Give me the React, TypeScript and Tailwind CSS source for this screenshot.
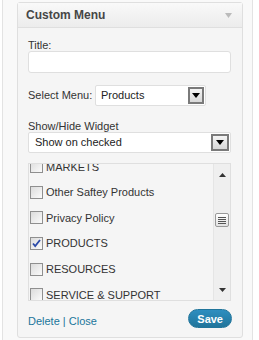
import React from 'react';

const items = [
  { label: 'MARKETS', checked: false },
  { label: 'Other Saftey Products', checked: false },
  { label: 'Privacy Policy', checked: false },
  { label: 'PRODUCTS', checked: true },
  { label: 'RESOURCES', checked: false },
  { label: 'SERVICE & SUPPORT', checked: false },
];

function DropButton({ className = '' }: { className?: string }) {
  return (
    <div
      className={`flex items-center justify-center border-2 border-[#7a7a7a] bg-gradient-to-b from-[#f4f4f4] to-[#d8d8d8] ${className}`}
    >
      <svg width="8" height="5" viewBox="0 0 8 5">
        <path d="M0 0h8L4 5z" fill="#000" />
      </svg>
    </div>
  );
}

function Checkbox({ checked }: { checked: boolean }) {
  return (
    <div className="relative h-[13px] w-[13px] shrink-0 border border-[#8f8f8f] bg-gradient-to-br from-[#dcdcdc] to-[#fbfbfb]">
      {checked && (
        <svg className="absolute left-[1px] top-[1px]" width="9" height="9" viewBox="0 0 9 9">
          <path d="M1 4.5l2.2 2.6L8 1" stroke="#2b4aa8" strokeWidth="1.8" fill="none" />
        </svg>
      )}
    </div>
  );
}

export default function App() {
  return (
    <div
      className="h-[340px] w-[259px] overflow-hidden bg-white text-[11px] text-[#333]"
      style={{ fontFamily: '"Liberation Sans", Arial, sans-serif' }}
    >
      <div className="ml-[2px] h-full w-[251px] border-x border-[#e3e3e3] bg-[#f9f9f9] pl-[14px] pt-[2px]">
        <div className="w-[226px] rounded-[3px] border border-[#dfdfdf] bg-[#f5f5f5]">
          {/* header */}
          <div className="flex h-[25px] items-center justify-between border-b border-[#dfdfdf] bg-gradient-to-b from-[#f9f9f9] to-[#ececec] pl-[8px] pr-[10px]">
            <span className="text-[12px] font-bold text-[#464646]">Custom Menu</span>
            <svg width="7" height="5" viewBox="0 0 7 5">
              <path d="M0 0h7L3.5 5z" fill="#bbb" />
            </svg>
          </div>

          {/* body */}
          <div className="px-[10px] pt-[11px]">
            <div className="leading-[12px]">Title:</div>
            <div className="h-[22px] w-[203px] rounded-[3px] border border-[#dfdfdf] bg-white" />

            <div className="mt-[12px] flex h-[21px] items-center">
              <span className="w-[67px] whitespace-nowrap">Select Menu:</span>
              <div className="flex h-[21px] w-[111px] items-center justify-between rounded-[2px] border border-[#dfdfdf] bg-white pl-[5px] pr-[1px]">
                <span className="text-[#222]">Products</span>
                <DropButton className="h-[17px] w-[16px]" />
              </div>
            </div>

            <div className="mt-[14px] leading-[12px]">Show/Hide Widget</div>
            <div className="flex h-[21px] w-[203px] items-center justify-between rounded-[2px] border border-[#dfdfdf] bg-white pl-[6px] pr-[1px]">
              <span className="text-[#222]">Show on checked</span>
              <DropButton className="h-[17px] w-[18px]" />
            </div>

            {/* checklist */}
            <div className="mt-[10px] flex h-[138px] w-[203px] overflow-hidden border border-[#dfdfdf] bg-[#f5f5f5]">
              <div className="flex-1 overflow-hidden pl-[1px]">
                <div className="mt-[-10px]">
                  {items.map((item) => (
                    <div key={item.label} className="flex h-[25.6px] items-center gap-[3px]">
                      <Checkbox checked={item.checked} />
                      <span>{item.label}</span>
                    </div>
                  ))}
                </div>
              </div>
              <div className="flex w-[17px] flex-col items-center border-l border-[#e5e5e5] bg-[#efefef] pt-[9px]">
                <svg width="7" height="4" viewBox="0 0 7 4">
                  <path d="M0 4h7L3.5 0z" fill="#333" />
                </svg>
                <div className="mt-[36px] flex h-[14px] w-[14px] flex-col items-center justify-center gap-[1px] rounded-[2px] border border-[#999] bg-gradient-to-b from-[#fff] to-[#e2e2e2]">
                  <div className="h-px w-[8px] bg-[#555]" />
                  <div className="h-px w-[8px] bg-[#555]" />
                  <div className="h-px w-[8px] bg-[#555]" />
                  <div className="h-px w-[8px] bg-[#555]" />
                </div>
                <div className="flex-1" />
                <svg className="mb-[8px]" width="7" height="4" viewBox="0 0 7 4">
                  <path d="M0 0h7L3.5 4z" fill="#333" />
                </svg>
              </div>
            </div>

            {/* footer */}
            <div className="mt-[8px] flex h-[19px] items-center justify-between">
              <div className="mt-[5px] text-[#21759b]">Delete | Close</div>
              <button className="h-[19px] rounded-full border border-[#21759b] bg-gradient-to-b from-[#2e8ec0] to-[#21759b] px-[8px] text-[11px] font-bold leading-[16px] text-white">
                Save
              </button>
            </div>
            <div className="h-[9px]" />
          </div>
        </div>
      </div>
    </div>
  );
}
